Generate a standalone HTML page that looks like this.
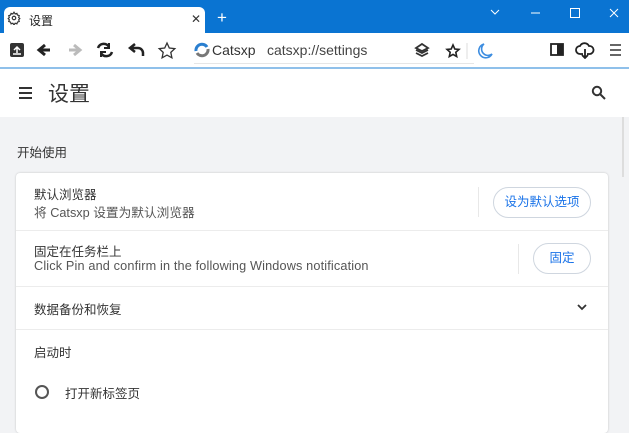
<!DOCTYPE html>
<html><head><meta charset="utf-8"><style>
*{margin:0;padding:0;box-sizing:border-box}
body{width:629px;height:424px;overflow:hidden;font-family:"Liberation Sans","Noto Sans CJK SC",sans-serif;background:#f2f3f5;position:relative;color:#202124}
.abs{position:absolute}
</style></head><body>
<div class="abs" style="left:0;top:0;width:629px;height:33px;background:#0a74d2"></div>
<div class="abs" style="left:4px;top:7px;width:201px;height:27px;background:#fff;border-radius:6px 6px 0 0"></div>
<svg class="abs" style="left:7px;top:11px" width="14" height="14" viewBox="0 0 24 24" fill="none" stroke="#333" stroke-width="2"><circle cx="12" cy="12" r="3"/><path d="M12 2l2 3 3-1 1 3 3 1-1 3 2 2-2 2 1 3-3 1-1 3-3-1-2 3-2-3-3 1-1-3-3-1 1-3-2-2 2-2-1-3 3-1 1-3 3 1z"/></svg>
<div class="abs" style="left:29px;top:12px;font-size:12px;color:#222">设置</div>
<div class="abs" style="left:191px;top:12px;font-size:12px;color:#333">✕</div>
<div class="abs" style="left:217px;top:8px;font-size:17px;color:#fff">+</div>
<svg class="abs" style="left:488px;top:7px" width="140" height="12" fill="none" stroke="#fff" stroke-width="1"><path d="M3 3l4 4 4-4"/><path d="M43 6h9"/><rect x="82.5" y="1.5" width="9" height="9"/><path d="M122 2l8 8M130 2l-8 8"/></svg>
<div class="abs" style="left:0;top:33px;width:629px;height:34px;background:#fff"></div>
<div class="abs" style="left:0;top:67px;width:629px;height:2px;background:#8fc0ea"></div>
<svg class="abs" style="left:8px;top:41px" width="170" height="18">
<rect x="2" y="2" width="14" height="14" rx="2" fill="#333"/><path d="M9 6v6M6 9l3-3 3 3M5 13h8" stroke="#fff" stroke-width="1.5" fill="none"/>
<path d="M31 9h11M37 4l-6 5 6 5" stroke="#222" stroke-width="3" fill="none"/>
<path d="M72 9h-11M66 4l6 5-6 5" stroke="#bbb" stroke-width="3" fill="none"/>
<path d="M90 7a6 6 0 0 1 11-1M104 11a6 6 0 0 1-11 1" stroke="#222" stroke-width="2.5" fill="none"/><path d="M101 2v5h-5M93 16v-5h5" stroke="#222" stroke-width="2" fill="none"/>
<path d="M135 15v-3a5 5 0 0 0-5-5h-7M127 3l-5 4 5 4" stroke="#222" stroke-width="2.5" fill="none"/>
<path d="M159 2l2.3 5 5.5.6-4 3.8 1.1 5.4-4.9-2.7-4.9 2.7 1.1-5.4-4-3.8 5.5-.6z" stroke="#333" stroke-width="1.3" fill="none"/>
</svg>
<svg class="abs" style="left:194px;top:42px" width="16" height="16"><path d="M2 9a6 6 0 0 1 11-4" stroke="#2a7fd0" stroke-width="3" fill="none"/><path d="M14 7a6 6 0 0 1-11 4" stroke="#777" stroke-width="3" fill="none"/></svg>
<div class="abs" style="left:212px;top:42px;font-size:14px;color:#333">Catsxp</div>
<div class="abs" style="left:267px;top:42px;font-size:14px;color:#444">catsxp://settings</div>
<div class="abs" style="left:194px;top:63px;width:280px;height:1px;background:#e6e6e6"></div>
<svg class="abs" style="left:413px;top:42px" width="100" height="17" fill="none">
<path d="M9 2l6 4-6 3-6-3zM3 11l6 3 6-3M3 8l6 3 6-3" stroke="#333" stroke-width="1.8"/>
<path d="M40 3l1.8 4 4.2.4-3.2 2.9.9 4.2-3.7-2.1-3.7 2.1.9-4.2-3.2-2.9 4.2-.4z" stroke="#222" stroke-width="1.6"/>
<path d="M54 1v16" stroke="#ddd"/>
<path d="M71 2a7 7 0 1 0 8 10 6 6 0 0 1-8-10z" stroke="#3d8de0" stroke-width="1.6"/>
</svg>
<svg class="abs" style="left:549px;top:41px" width="80" height="18" fill="none">
<rect x="2" y="3" width="12" height="11" stroke="#222" stroke-width="1.8"/><rect x="8" y="3" width="6" height="11" fill="#222"/>
<path d="M34 13h-3a4 4 0 0 1 0-8 5 5 0 0 1 9 0 4 4 0 0 1 1 8h-3M36 8v9M33 14l3 3 3-3" stroke="#222" stroke-width="1.8"/>
<path d="M61 4h11M61 9h11M61 14h11" stroke="#333" stroke-width="1.5"/>
</svg>
<div class="abs" style="left:0;top:69px;width:629px;height:48px;background:#fff"></div>
<svg class="abs" style="left:18px;top:86px" width="16" height="14"><path d="M1 2h13M1 7h13M1 12h13" stroke="#333" stroke-width="2"/></svg>
<div class="abs" style="left:48px;top:78px;font-size:21px;color:#333">设置</div>
<svg class="abs" style="left:591px;top:85px" width="16" height="16" fill="none" stroke="#333" stroke-width="2"><circle cx="6" cy="6" r="4.2"/><path d="M9 9l5 5"/></svg>
<div class="abs" style="left:17px;top:142px;font-size:12.5px;color:#333">开始使用</div>
<div class="abs" style="left:622px;top:117px;width:2px;height:60px;background:#ddd"></div>
<div class="abs" style="left:16px;top:173px;width:592px;height:260px;background:#fff;border-radius:4px;box-shadow:0 0 2px rgba(0,0,0,.2)"></div>
<div class="abs" style="left:34px;top:184px;font-size:12.5px;color:#333">默认浏览器</div>
<div class="abs" style="left:34px;top:202px;font-size:12.7px;color:#555">将 Catsxp 设置为默认浏览器</div>
<div class="abs" style="left:478px;top:187px;width:1px;height:30px;background:#e8e8e8"></div>
<div class="abs" style="left:493px;top:187px;width:98px;height:31px;border:1px solid #cfd6df;border-radius:16px;font-size:12.5px;color:#1a73e8;text-align:center;line-height:29px">设为默认选项</div>
<div class="abs" style="left:16px;top:230px;width:592px;height:1px;background:#ececec"></div>
<div class="abs" style="left:34px;top:241px;font-size:12.5px;color:#333">固定在任务栏上</div>
<div class="abs" style="left:34px;top:259px;font-size:12.7px;color:#555;letter-spacing:0.15px">Click Pin and confirm in the following Windows notification</div>
<div class="abs" style="left:518px;top:244px;width:1px;height:30px;background:#e8e8e8"></div>
<div class="abs" style="left:533px;top:243px;width:58px;height:31px;border:1px solid #cfd6df;border-radius:16px;font-size:12.5px;color:#1a73e8;text-align:center;line-height:29px">固定</div>
<div class="abs" style="left:16px;top:286px;width:592px;height:1px;background:#ececec"></div>
<div class="abs" style="left:34px;top:299px;font-size:12.5px;color:#333">数据备份和恢复</div>
<svg class="abs" style="left:577px;top:303px" width="10" height="8"><path d="M1 2l4 4 4-4" stroke="#333" stroke-width="1.8" fill="none"/></svg>
<div class="abs" style="left:16px;top:329px;width:592px;height:1px;background:#ececec"></div>
<div class="abs" style="left:34px;top:342px;font-size:12.5px;color:#333">启动时</div>
<div class="abs" style="left:35px;top:385px;width:14px;height:14px;border:2px solid #555;border-radius:50%"></div>
<div class="abs" style="left:65px;top:383px;font-size:12.5px;color:#333">打开新标签页</div>
</body></html>
